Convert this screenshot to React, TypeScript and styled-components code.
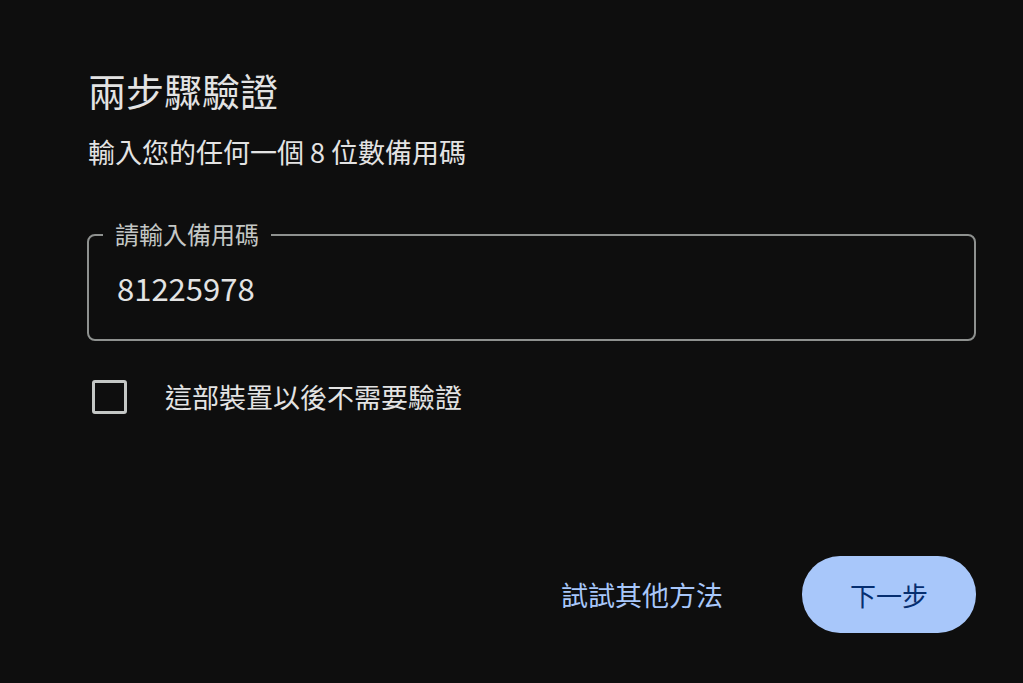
import React from "react";
import styled, { createGlobalStyle } from "styled-components";

const GlobalStyle = createGlobalStyle`
  html, body {
    margin: 0;
    padding: 0;
    background: #0e0e0e;
  }
  body {
    font-family: "Noto Sans CJK TC", "Noto Sans", sans-serif;
    color: #e3e3e3;
  }
`;

const Page = styled.main`
  min-height: 683px;
  box-sizing: border-box;
  padding: 67px 47px 0 88px;
  display: flex;
  flex-direction: column;
`;

const Title = styled.h1`
  margin: 0;
  font-size: 38px;
  line-height: 46px;
  font-weight: 400;
  color: #e3e3e3;
`;

const Subtitle = styled.p`
  margin: 21px 0 0;
  font-size: 27px;
  line-height: 36px;
  color: #e3e3e3;
`;

const Field = styled.div`
  position: relative;
  margin: 64px 0 0 -1px;
  height: 107px;
  box-sizing: border-box;
  border: 2px solid #8e918f;
  border-radius: 8px;
  display: flex;
  align-items: center;
  padding: 0 28px;
`;

const FieldLabel = styled.label`
  position: absolute;
  top: -16px;
  left: 14px;
  padding: 0 12px;
  background: #0e0e0e;
  font-size: 24px;
  line-height: 28px;
  color: #c4c7c5;
`;

const CodeInput = styled.input`
  flex: 1;
  background: transparent;
  border: none;
  outline: none;
  padding: 0;
  font-family: "Noto Sans CJK TC", "Noto Sans", sans-serif;
  font-size: 31px;
  line-height: 40px;
  color: #e3e3e3;
`;

const CheckRow = styled.label`
  margin-top: 38px;
  display: flex;
  align-items: center;
  gap: 38px;
  padding-left: 4px;
  cursor: pointer;
`;

const Box = styled.span`
  width: 35px;
  height: 34px;
  box-sizing: border-box;
  border: 3px solid #c4c7c5;
  border-radius: 3px;
`;

const CheckText = styled.span`
  font-size: 27px;
  line-height: 36px;
  color: #e3e3e3;
`;

const Actions = styled.div`
  margin-top: 141px;
  display: flex;
  justify-content: flex-end;
  align-items: center;
  gap: 79px;
`;

const TextButton = styled.button`
  background: none;
  border: none;
  padding: 0;
  font-family: "Noto Sans CJK TC", "Noto Sans", sans-serif;
  font-size: 27px;
  line-height: 36px;
  color: #a8c7fa;
  cursor: pointer;
`;

const PrimaryButton = styled.button`
  width: 174px;
  height: 77px;
  border: none;
  border-radius: 38px;
  background: #a8c7fa;
  color: #062e6f;
  font-family: "Noto Sans CJK TC", "Noto Sans", sans-serif;
  font-size: 26px;
  cursor: pointer;
`;

export default function App() {
  return (
    <>
      <GlobalStyle />
      <Page>
        <Title>兩步驟驗證</Title>
        <Subtitle>輸入您的任何一個 8 位數備用碼</Subtitle>
        <Field>
          <FieldLabel>請輸入備用碼</FieldLabel>
          <CodeInput defaultValue="81225978" />
        </Field>
        <CheckRow>
          <Box />
          <CheckText>這部裝置以後不需要驗證</CheckText>
        </CheckRow>
        <Actions>
          <TextButton>試試其他方法</TextButton>
          <PrimaryButton>下一步</PrimaryButton>
        </Actions>
      </Page>
    </>
  );
}
